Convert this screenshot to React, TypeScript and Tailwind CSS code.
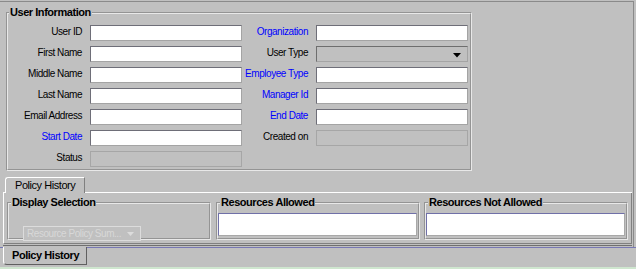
import React from "react";

type Kind = "text" | "disabled" | "combo";

interface Cell {
  label: string;
  blue?: boolean;
  kind: Kind;
}

const LEFT: Cell[] = [
  { label: "User ID", kind: "text" },
  { label: "First Name", kind: "text" },
  { label: "Middle Name", kind: "text" },
  { label: "Last Name", kind: "text" },
  { label: "Email Address", kind: "text" },
  { label: "Start Date", blue: true, kind: "text" },
  { label: "Status", kind: "disabled" },
];

const RIGHT: (Cell | null)[] = [
  { label: "Organization", blue: true, kind: "text" },
  { label: "User Type", kind: "combo" },
  { label: "Employee Type", blue: true, kind: "text" },
  { label: "Manager Id", blue: true, kind: "text" },
  { label: "End Date", blue: true, kind: "text" },
  { label: "Created on", kind: "disabled" },
  null,
];

function Box({ kind }: { kind: Kind }) {
  if (kind === "text") {
    return (
      <div className="ml-[8px] h-[16px] w-[152px] shrink-0 bg-white border border-t-[#6e6e78] border-l-[#6e6e78] border-r-[#a4a4a4] border-b-[#a4a4a4]" />
    );
  }
  if (kind === "combo") {
    return (
      <div className="ml-[8px] h-[16px] w-[152px] shrink-0 bg-[#c0c0c0] border border-t-[#6e6e6e] border-l-[#6e6e6e] border-r-[#a4a4a4] border-b-[#a4a4a4] flex items-center justify-end pr-[6px]">
        <svg width="8" height="5" viewBox="0 0 8 5" className="mt-[2px]">
          <polygon points="0,0 8,0 4,4.5" fill="#000" />
        </svg>
      </div>
    );
  }
  return (
    <div className="ml-[8px] h-[16px] w-[152px] shrink-0 bg-[#c0c0c0] border border-[#a6a6a6]" />
  );
}

function Label({ cell, width }: { cell: Cell | null; width: string }) {
  return (
    <span className={`${width} shrink-0 text-right leading-[14px] whitespace-nowrap ${cell?.blue ? "text-[#0000ff]" : "text-black"}`}>
      {cell?.label}
    </span>
  );
}

function UserInfo() {
  return (
    <fieldset className="ml-[6px] mt-[4px] w-[466px] border-2 [border-style:groove] border-[#e8e8e8] pt-[6px] pb-[2px]">
      <legend className="ml-[1px] px-px text-[11px] font-bold leading-[13px]">User Information</legend>
      <div className="flex flex-col gap-[5px]">
        {LEFT.map((l, i) => {
          const r = RIGHT[i];
          return (
            <div key={l.label} className="flex h-[16px]">
              <Label cell={l} width="w-[74px]" />
              <Box kind={l.kind} />
              <Label cell={r} width="w-[66px]" />
              {r && <Box kind={r.kind} />}
            </div>
          );
        })}
      </div>
    </fieldset>
  );
}

function ListGroup({ title }: { title: string }) {
  return (
    <fieldset className="w-[204px] h-[44px] shrink-0 border-2 [border-style:groove] border-[#e8e8e8]">
      <legend className="ml-[2px] px-px text-[11px] font-bold leading-[13px] whitespace-nowrap">{title}</legend>
      <div className="mt-[4px] mr-px h-[23px] bg-white border border-t-[#7070a8] border-l-[#7070a8] border-r-[#a8a8a8] border-b-[#a8a8a8]" />
    </fieldset>
  );
}

function PolicyTabs() {
  return (
    <div className="ml-[3px] mt-[6px] w-[629px] flex flex-col">
      <div className="flex h-[16px]">
        <div className="w-[2px] border-b border-white" />
        <div className="w-[80px] border-l border-t border-r border-white border-r-[#808080] rounded-tl-[3px] pl-[9px] text-[11px] leading-[14px] whitespace-nowrap">
          Policy History
        </div>
        <div className="flex-1 border-b border-white" />
      </div>
      <div className="h-[51px] border-l border-white border-r border-b border-r-[#808080] border-b-[#808080] shadow-[0_1px_0_#c0c0c0,0_2px_0_#707070] flex gap-[5px] pl-[3px] pt-[3px]">
        <fieldset className="w-[204px] h-[44px] shrink-0 border-2 [border-style:groove] border-[#e8e8e8]">
          <legend className="ml-[2px] px-px text-[11px] font-bold leading-[13px]">Display Selection</legend>
          <div className="relative ml-[14px] mt-[17px] h-[15px] w-[118px] bg-[#c0c0c0] border border-[#dcdcdc] flex items-center pl-[3px] text-[#d8d8d8] leading-[13px] whitespace-nowrap">
            <span className="flex-1">Resource Policy Sum...</span>
            <svg width="7" height="4" viewBox="0 0 7 4" className="mr-[6px] mt-[1px]">
              <polygon points="0,0 7,0 3.5,4" fill="#dcdcdc" />
            </svg>
          </div>
        </fieldset>
        <div className="w-[203px] shrink-0 flex">
          <ListGroup title="Resources Allowed" />
        </div>
        <ListGroup title="Resources Not Allowed" />
      </div>
    </div>
  );
}

function BottomTabs() {
  return (
    <div className="flex h-[18px] shrink-0">
      <div className="w-[3px] border-t border-[#7878b4]" />
      <div className="w-[84px] border-l border-white border-r border-b border-r-[#606060] border-b-[#606060] rounded-bl-[4px] pl-[8px] text-[11px] font-bold leading-[17px] whitespace-nowrap">
        Policy History
      </div>
      <div className="flex-1 border-t border-[#7878b4]" />
    </div>
  );
}

export default function App() {
  return (
    <div className="w-[636px] h-[269px] bg-[#c0c0c0] overflow-hidden flex flex-col font-['Liberation_Sans',Arial,sans-serif] text-[10px] tracking-[-0.45px] text-black">
      <div className="mt-px h-[246px] w-[634px] shrink-0 border-t border-r border-[#8a8a8a] flex flex-col">
        <UserInfo />
        <PolicyTabs />
      </div>
      <BottomTabs />
      <div className="mt-auto h-[2px] bg-[#cfe6cf]" />
    </div>
  );
}
